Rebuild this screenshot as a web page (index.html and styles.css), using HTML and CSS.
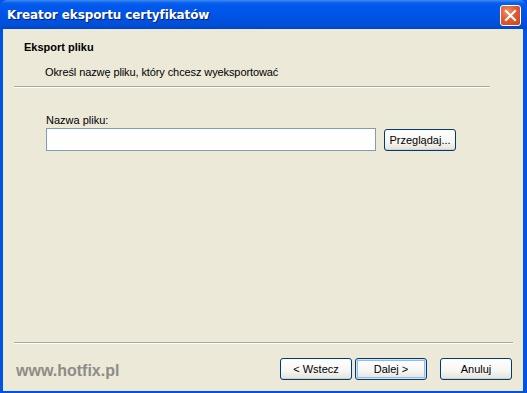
FILE: index.html
```html
<!DOCTYPE html>
<html lang="pl">
<head>
    <meta charset="UTF-8">
    <title>Kreator eksportu certyfikatów</title>
    <link rel="stylesheet" href="styles.css">
</head>
<body>
    <div class="window">
        <div class="titlebar">
            <span class="title">Kreator eksportu certyfikatów</span>
            <button class="close" type="button">
                <svg width="13" height="13" viewBox="0 0 13 13">
                    <path d="M2 2 L11 11 M11 2 L2 11" stroke="#fff" stroke-width="2.2" stroke-linecap="square"/>
                </svg>
            </button>
        </div>

        <div class="client">
            <div class="header">
                <h1>Eksport pliku</h1>
                <p>Określ nazwę pliku, który chcesz wyeksportować</p>
            </div>
            <hr class="sep sep-top">

            <div class="content">
                <label for="fileName">Nazwa pliku:</label>
                <div class="file-row">
                    <input class="inputBox" type="text" id="fileName">
                    <button class="button browse" type="button">Przeglądaj...</button>
                </div>
            </div>

            <hr class="sep sep-bottom">
            <div class="footer">
                <span class="watermark">www.hotfix.pl</span>
                <div class="nav">
                    <button class="button" type="button">&lt; Wstecz</button>
                    <button class="button default" type="button">Dalej &gt;</button>
                    <button class="button cancel" type="button">Anuluj</button>
                </div>
            </div>
        </div>
    </div>
</body>
</html>
```

FILE: styles.css
```css
body {
    margin: 0;
    font-family: 'Liberation Sans', Arial, sans-serif;
    font-size: 11px;
    color: #000;
    background: #ECE9D8;
}

.window {
    width: 527px;
    height: 393px;
    display: flex;
    flex-direction: column;
    background: #0054E3;
}

.titlebar {
    height: 29px;
    flex: none;
    display: flex;
    align-items: center;
    justify-content: space-between;
    padding: 0 6px 0 7px;
    background: linear-gradient(to bottom, #3C8CF8 0px, #0A5FE8 3px, #0058EE 6px, #0054E3 16px, #0050DA 24px, #0046C8 29px);
    border-radius: 7px 7px 0 0;
}

.title {
    color: #fff;
    font-family: 'DejaVu Sans', sans-serif;
    font-weight: bold;
    font-size: 12px;
    letter-spacing: -0.1px;
    text-shadow: 1px 1px 0 #0A1E6E;
    margin-top: 1px;
}

.close {
    width: 21px;
    height: 21px;
    padding: 0;
    margin-top: 1px;
    border: 1px solid #fff;
    border-radius: 3px;
    background: radial-gradient(circle at 35% 30%, #F0906A 0%, #E45A2E 45%, #C8431E 100%);
    display: flex;
    align-items: center;
    justify-content: center;
}

.client {
    flex: 1;
    display: flex;
    flex-direction: column;
    background: #ECE9D8;
    margin: 0 4px 2px 3px;
}

.header h1 {
    font-size: 11px;
    line-height: 13px;
    font-weight: bold;
    margin: 12px 0 0 21px;
}

.header p {
    line-height: 13px;
    margin: 12px 0 0 42px;
    letter-spacing: -0.1px;
}

.sep {
    height: 0;
    border: 0;
    border-top: 1px solid #ACA899;
    border-bottom: 1px solid #fff;
    margin: 0;
}

.sep-top {
    margin: 7px 0 0 11px;
    width: 476px;
}

.sep-bottom {
    margin: 0 10px 0 11px;
}

.content {
    flex: 1;
    padding-left: 43px;
}

.content label {
    display: block;
    line-height: 13px;
    margin-top: 26px;
}

.file-row {
    display: flex;
    align-items: flex-start;
    gap: 8px;
    margin-top: 1px;
}

.inputBox {
    width: 330px;
    height: 23px;
    box-sizing: border-box;
    border: 1px solid #7F9DB9;
    background: #fff;
    margin: 0;
}

.button {
    height: 22px;
    box-sizing: border-box;
    padding: 0;
    font-family: 'Liberation Sans', Arial, sans-serif;
    font-size: 11px;
    color: #000;
    border: 1px solid #003C74;
    border-radius: 3px;
    background: linear-gradient(to bottom, #FFFFFF 0%, #F6F6F3 60%, #E3E1D8 100%);
    box-shadow: inset 0 -1px 0 #D6D0C5;
}

.browse {
    width: 72px;
    margin-top: 1px;
    padding: 0 3px;
}

.footer {
    display: flex;
    align-items: center;
    justify-content: space-between;
    padding: 13px 11px 11px 13px;
}

.watermark {
    font-size: 16px;
    font-weight: bold;
    color: #8E8C86;
    margin-top: 5px;
}

.nav {
    display: flex;
}

.nav .button {
    width: 72px;
}

.nav .default {
    margin-left: 3px;
    box-shadow: inset 0 0 0 1px #CEE7FF, inset 0 0 0 2px #98B8EA;
}

.nav .cancel {
    margin-left: 13px;
}
```
